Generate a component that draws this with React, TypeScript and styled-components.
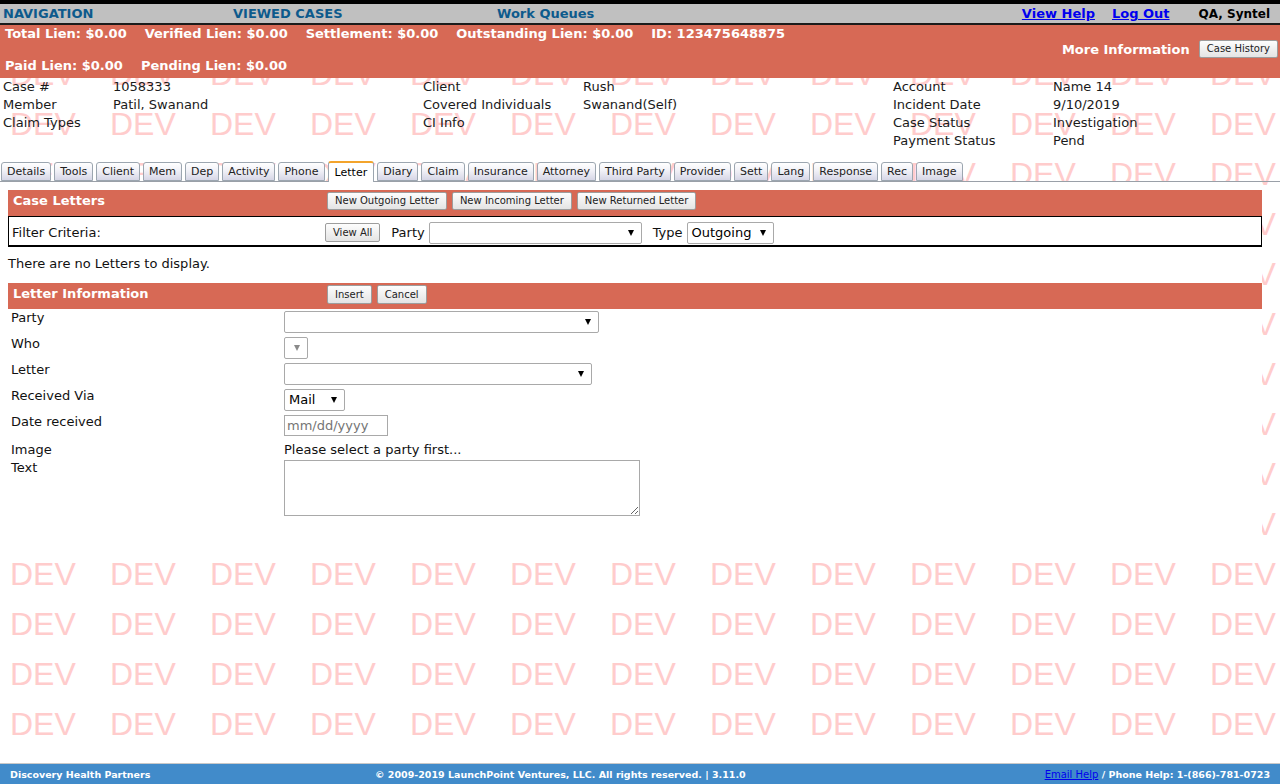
import React from "react";
import styled, { createGlobalStyle } from "styled-components";

const RED = "#d76955";

const GlobalStyle = createGlobalStyle`
  html, body { margin: 0; padding: 0; background: #fff; }
  body {
    font-family: "DejaVu Sans", Verdana, sans-serif;
    font-size: 13px;
    color: #111;
  }
  #root { min-height: 784px; }
`;

const Page = styled.div`
  position: relative;
  min-height: 784px;
  display: flex;
  flex-direction: column;
  overflow: hidden;
`;

const Watermark = styled.div`
  position: absolute;
  inset: 0;
  z-index: 0;
  display: grid;
  grid-template-columns: repeat(13, 100px);
  grid-auto-rows: 50px;
  pointer-events: none;
  user-select: none;
`;

const Mark = styled.span`
  padding: 8px 0 0 10px;
  font-family: "Liberation Sans", Arial, sans-serif;
  font-size: 32px;
  line-height: 32px;
  color: #ffcccc;
`;

const Content = styled.div`
  position: relative;
  z-index: 1;
  flex: 1;
  display: flex;
  flex-direction: column;
`;

/* ---------- top navigation ---------- */
const TopNav = styled.nav`
  display: grid;
  grid-template-columns: 230px 264px 1fr auto;
  align-items: center;
  height: 19px;
  padding: 0 10px 0 3px;
  background: #c0c0c0;
  border-top: 4px solid #000;
  border-bottom: 2px solid #1b1b1b;
  font-weight: bold;
  font-size: 13px;
`;

const NavItem = styled.span`
  color: #0d5a8c;
`;

const NavRight = styled.div`
  display: flex;
  align-items: center;
  gap: 17px;
`;

const HelpLink = styled.a`
  color: #0000ee;
  text-decoration: underline;
  cursor: pointer;
`;

const UserName = styled.span`
  margin-left: 12px;
  font-size: 12px;
  color: #000;
`;

/* ---------- lien header ---------- */
const LienBar = styled.header`
  display: flex;
  justify-content: space-between;
  height: 53px;
  background: ${RED};
  color: #fff;
  font-weight: bold;
  font-size: 13px;
`;

const LienRows = styled.div`
  display: flex;
  flex-direction: column;
  gap: 16px;
  padding: 1px 0 0 5px;
`;

const LienRow = styled.div`
  display: flex;
  gap: 18px;
  line-height: 16px;
`;

const MoreInfo = styled.div`
  display: flex;
  align-items: center;
  gap: 9px;
  margin-top: 15px;
  padding-right: 2px;
  align-self: flex-start;
`;

const Btn = styled.button<{ $tall?: boolean }>`
  font-family: "DejaVu Sans", Verdana, sans-serif;
  font-size: 10px;
  color: #222;
  height: ${(p) => (p.$tall ? 19 : 18)}px;
  padding: 0 7px;
  border: 1px solid #9d9d9d;
  border-radius: 2px;
  background: linear-gradient(#fdfdfd, #e4e4e4);
  line-height: 16px;
  white-space: nowrap;
  cursor: pointer;
`;

/* ---------- case info ---------- */
const InfoGrid = styled.div`
  display: grid;
  grid-template-columns: 110px 310px 160px 310px 160px 1fr;
  grid-auto-rows: 16px;
  row-gap: 2px;
  line-height: 16px;
  padding: 1px 0 0 3px;
  color: #1a1a1a;
`;

/* ---------- tabs ---------- */
const TabBar = styled.div`
  display: flex;
  align-items: flex-end;
  height: 20px;
  margin-top: 12px;
  padding-left: 1px;
  border-bottom: 1px solid #9aa0a8;
`;

const Tab = styled.div<{ $active?: boolean }>`
  display: flex;
  align-items: center;
  box-sizing: border-box;
  height: ${(p) => (p.$active ? 21 : 19)}px;
  margin-right: 3px;
  margin-bottom: ${(p) => (p.$active ? -1 : 0)}px;
  padding: 0 ${(p) => (p.$active ? 6 : 5)}px;
  font-size: 11px;
  color: ${(p) => (p.$active ? "#000" : "#222")};
  border: 1px solid #9ca6b0;
  border-bottom: ${(p) => (p.$active ? "none" : "1px solid #9ca6b0")};
  border-top: ${(p) => (p.$active ? "2px solid #f3a42c" : "1px solid #9ca6b0")};
  border-radius: 3px 3px 0 0;
  background: ${(p) =>
    p.$active ? "#fff" : "linear-gradient(#ffffff 0%, #f1f1f7 45%, #d6d6e6 100%)"};
  white-space: nowrap;
`;

/* ---------- main panel ---------- */
const Panel = styled.main`
  background: #fff;
  margin: 0 18px 0 8px;
  padding: 8px 0 28px;
`;

const SectionBar = styled.div`
  display: grid;
  grid-template-columns: 319px 1fr;
  align-items: start;
  box-sizing: border-box;
  height: 26px;
  padding-top: 2px;
  background: ${RED};
`;

const SectionTitle = styled.div`
  padding-left: 5px;
  color: #fff;
  font-weight: bold;
  line-height: 17px;
`;

const ButtonGroup = styled.div`
  display: flex;
  gap: 5px;
`;

const FilterBox = styled.div`
  display: grid;
  grid-template-columns: 313px auto;
  align-items: center;
  box-sizing: border-box;
  height: 31px;
  padding: 3px 0 0 3px;
  border: 1px solid #000;
  border-bottom-width: 2px;
`;

const FilterControls = styled.div`
  display: flex;
  align-items: center;
`;

const InlineLabel = styled.span<{ $gap: number }>`
  margin: 0 ${(p) => p.$gap}px 0 11px;
`;

const SelectBox = styled.div<{ $w: number }>`
  display: inline-flex;
  align-items: center;
  justify-content: space-between;
  box-sizing: border-box;
  width: ${(p) => p.$w}px;
  height: 22px;
  padding: 0 7px 0 4px;
  border: 1px solid #a9a9a9;
  border-radius: 2px;
  background: #fff;
  font-size: 13px;
  color: #000;
`;

const Caret = styled.span<{ $disabled?: boolean }>`
  width: 0;
  height: 0;
  border-left: 3px solid transparent;
  border-right: 3px solid transparent;
  border-top: 6px solid ${(p) => (p.$disabled ? "#8a8a8a" : "#000")};
`;

const NoData = styled.div`
  padding: 9px 0 11px;
  line-height: 16px;
`;

const FormRow = styled.div<{ $h: number; $pt?: number }>`
  display: grid;
  grid-template-columns: 273px auto;
  align-items: start;
  box-sizing: border-box;
  height: ${(p) => p.$h}px;
  padding: ${(p) => p.$pt ?? 0}px 0 0 3px;
  line-height: 16px;
`;

const FormBody = styled.div`
  margin-top: 1px;
`;

const Control = styled.div`
  margin-top: 1px;
  display: flex;
`;

const DateInput = styled.input`
  box-sizing: border-box;
  width: 104px;
  height: 21px;
  padding: 1px 2px;
  border: 1px solid #a9a9a9;
  font-family: "DejaVu Sans", Verdana, sans-serif;
  font-size: 13px;
  &::placeholder { color: #757575; }
`;

const TextArea = styled.textarea`
  display: block;
  box-sizing: border-box;
  width: 356px;
  height: 56px;
  border: 1px solid #a9a9a9;
  font-family: "DejaVu Sans", Verdana, sans-serif;
  font-size: 13px;
`;

/* ---------- footer ---------- */
const Footer = styled.footer`
  margin-top: auto;
  display: grid;
  grid-template-columns: 365px 1fr auto;
  align-items: center;
  height: 20px;
  padding: 0 10px;
  background: #418bca;
  border-top: 1px solid #c8c8c8;
  color: #fff;
  font-size: 9.5px;
  font-weight: bold;
`;

const FooterLink = styled.a`
  color: #0000ee;
  font-weight: normal;
  font-size: 10px;
  text-decoration: underline;
`;

const tabs = [
  "Details", "Tools", "Client", "Mem", "Dep", "Activity", "Phone", "Letter", "Diary",
  "Claim", "Insurance", "Attorney", "Third Party", "Provider", "Sett", "Lang",
  "Response", "Rec", "Image",
];

const info: string[][] = [
  ["Case #", "1058333", "Client", "Rush", "Account", "Name 14"],
  ["Member", "Patil, Swanand", "Covered Individuals", "Swanand(Self)", "Incident Date", "9/10/2019"],
  ["Claim Types", "", "CI Info", "", "Case Status", "Investigation"],
  ["", "", "", "", "Payment Status", "Pend"],
];

export default function App() {
  const marks = Array.from({ length: 13 * 16 });
  return (
    <>
      <GlobalStyle />
      <Page>
        <Watermark aria-hidden>
          {marks.map((_, i) => (
            <Mark key={i}>DEV</Mark>
          ))}
        </Watermark>
        <Content>
          <TopNav>
            <NavItem>NAVIGATION</NavItem>
            <NavItem>VIEWED CASES</NavItem>
            <NavItem>Work Queues</NavItem>
            <NavRight>
              <HelpLink>View Help</HelpLink>
              <HelpLink>Log Out</HelpLink>
              <UserName>QA, Syntel</UserName>
            </NavRight>
          </TopNav>

          <LienBar>
            <LienRows>
              <LienRow>
                <span>Total Lien: $0.00</span>
                <span>Verified Lien: $0.00</span>
                <span>Settlement: $0.00</span>
                <span>Outstanding Lien: $0.00</span>
                <span>ID: 123475648875</span>
              </LienRow>
              <LienRow>
                <span>Paid Lien: $0.00</span>
                <span>Pending Lien: $0.00</span>
              </LienRow>
            </LienRows>
            <MoreInfo>
              <span>More Information</span>
              <Btn>Case History</Btn>
            </MoreInfo>
          </LienBar>

          <InfoGrid>
            {info.flat().map((t, i) => (
              <span key={i}>{t}</span>
            ))}
          </InfoGrid>

          <TabBar>
            {tabs.map((t) => (
              <Tab key={t} $active={t === "Letter"}>
                {t}
              </Tab>
            ))}
          </TabBar>

          <Panel>
            <SectionBar>
              <SectionTitle>Case Letters</SectionTitle>
              <ButtonGroup>
                <Btn>New Outgoing Letter</Btn>
                <Btn>New Incoming Letter</Btn>
                <Btn>New Returned Letter</Btn>
              </ButtonGroup>
            </SectionBar>
            <FilterBox>
              <span>Filter Criteria:</span>
              <FilterControls>
                <Btn $tall>View All</Btn>
                <InlineLabel $gap={4}>Party</InlineLabel>
                <SelectBox $w={213}>
                  <span />
                  <Caret />
                </SelectBox>
                <InlineLabel $gap={4}>Type</InlineLabel>
                <SelectBox $w={87}>
                  <span>Outgoing</span>
                  <Caret />
                </SelectBox>
              </FilterControls>
            </FilterBox>

            <NoData>There are no Letters to display.</NoData>

            <SectionBar>
              <SectionTitle>Letter Information</SectionTitle>
              <ButtonGroup>
                <Btn $tall>Insert</Btn>
                <Btn $tall>Cancel</Btn>
              </ButtonGroup>
            </SectionBar>

            <FormBody>
              <FormRow $h={26}>
                <span>Party</span>
                <Control>
                  <SelectBox $w={315}>
                    <span />
                    <Caret />
                  </SelectBox>
                </Control>
              </FormRow>
              <FormRow $h={26}>
                <span>Who</span>
                <Control>
                  <SelectBox $w={24}>
                    <span />
                    <Caret $disabled />
                  </SelectBox>
                </Control>
              </FormRow>
              <FormRow $h={26}>
                <span>Letter</span>
                <Control>
                  <SelectBox $w={308}>
                    <span />
                    <Caret />
                  </SelectBox>
                </Control>
              </FormRow>
              <FormRow $h={26}>
                <span>Received Via</span>
                <Control>
                  <SelectBox $w={61}>
                    <span>Mail</span>
                    <Caret />
                  </SelectBox>
                </Control>
              </FormRow>
              <FormRow $h={26}>
                <span>Date received</span>
                <Control>
                  <DateInput type="text" placeholder="mm/dd/yyyy" />
                </Control>
              </FormRow>
              <FormRow $h={20} $pt={2}>
                <span>Image</span>
                <span>Please select a party first...</span>
              </FormRow>
              <FormRow $h={56}>
                <span>Text</span>
                <TextArea />
              </FormRow>
            </FormBody>
          </Panel>

          <Footer>
            <span>Discovery Health Partners</span>
            <span>© 2009-2019 LaunchPoint Ventures, LLC. All rights reserved. | 3.11.0</span>
            <span>
              <FooterLink>Email Help</FooterLink> / Phone Help: 1-(866)-781-0723
            </span>
          </Footer>
        </Content>
      </Page>
    </>
  );
}
